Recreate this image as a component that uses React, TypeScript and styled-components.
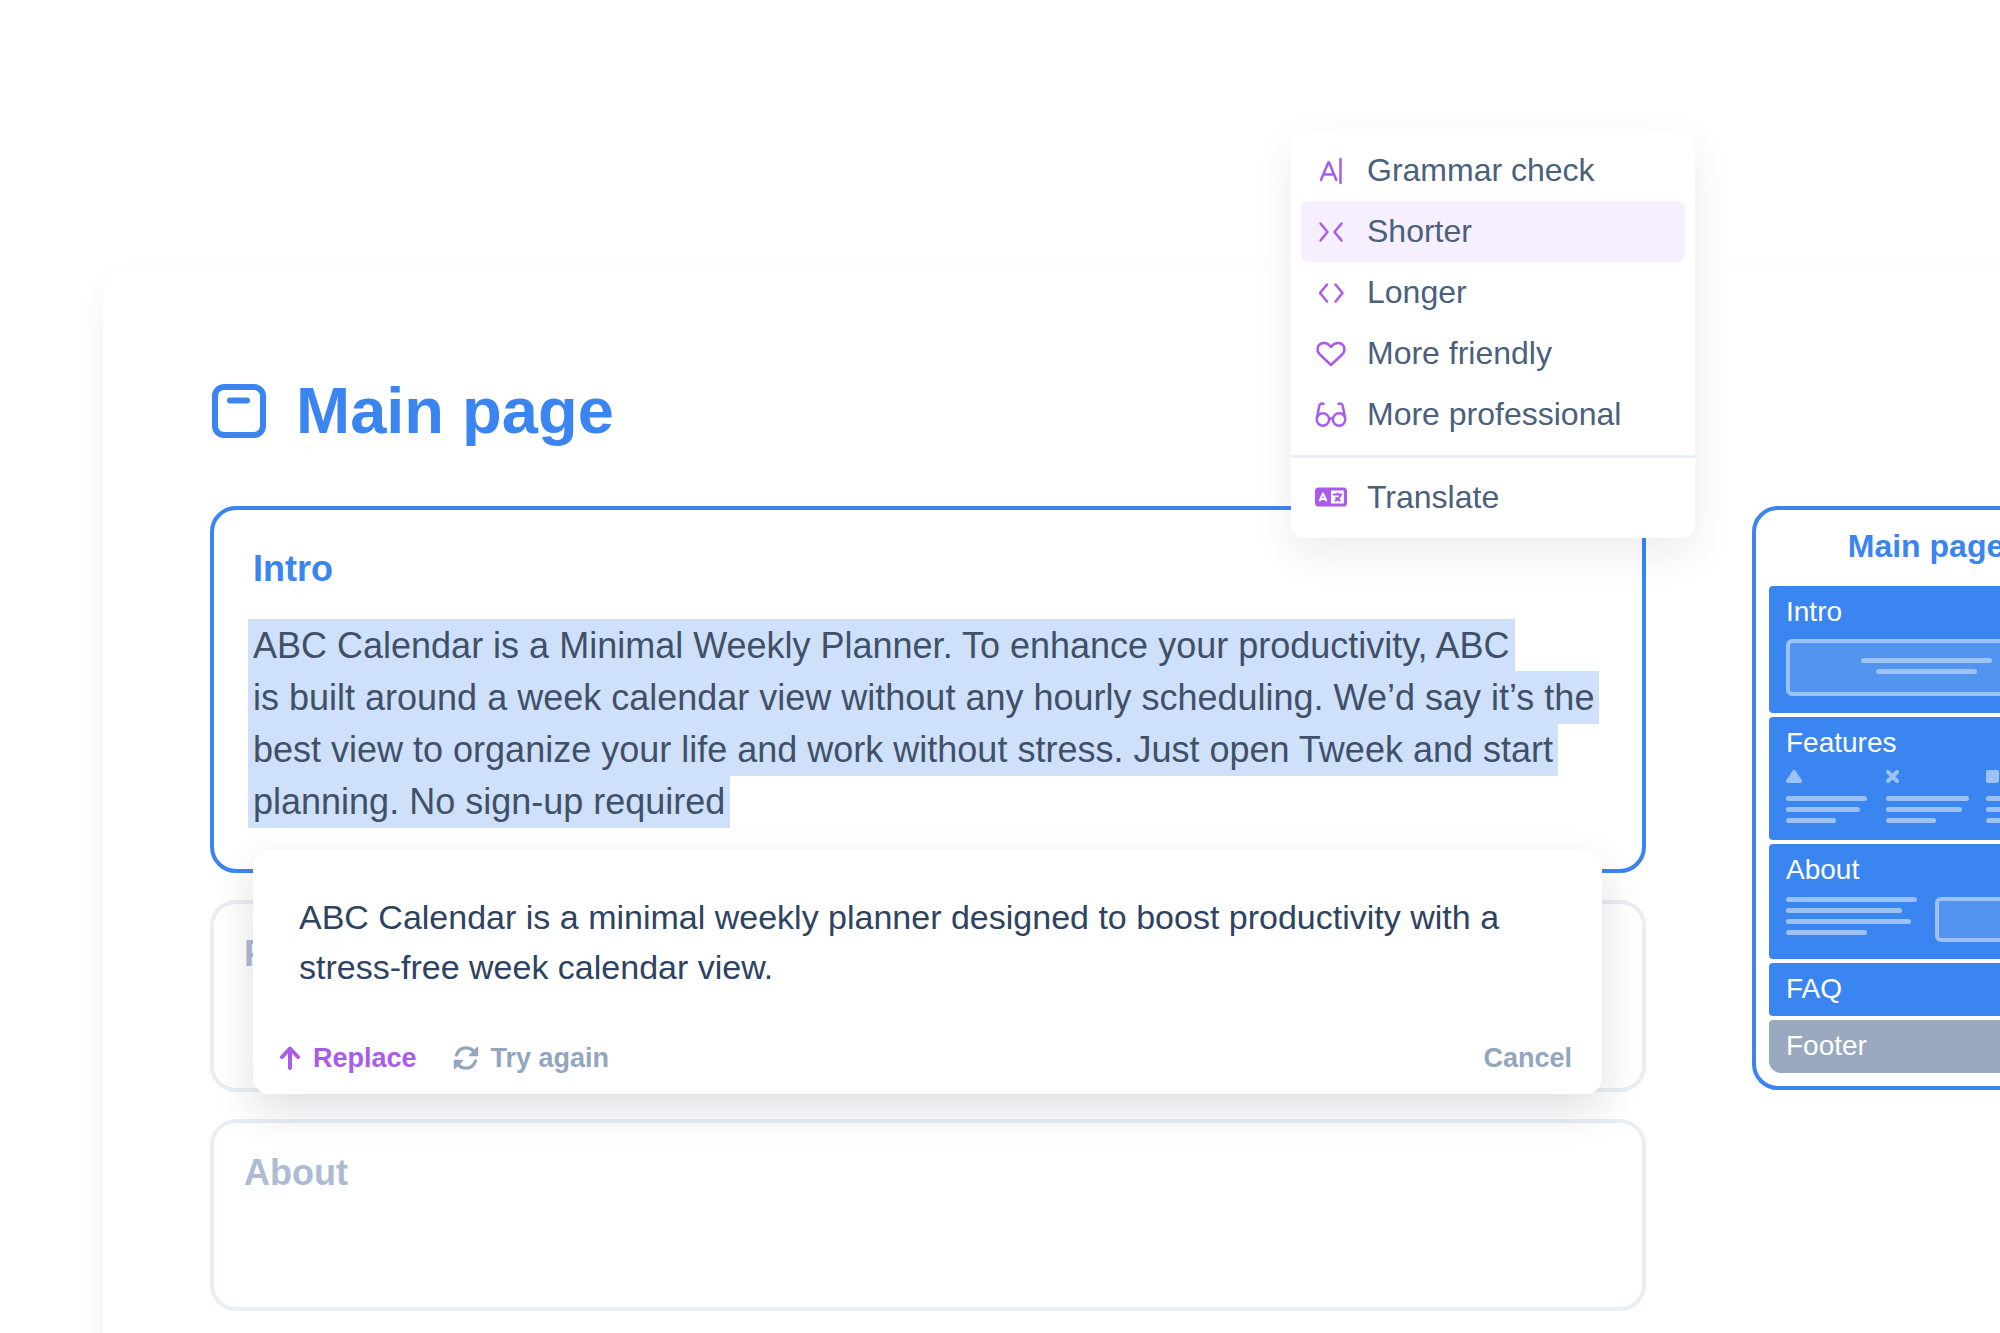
import React from "react";
import styled, { createGlobalStyle, css } from "styled-components";
import { FaLanguage } from "react-icons/fa6";

const blue = "#3b85f0";
const purple = "#a95cec";
const slate = "#93a6bf";

const GlobalStyle = createGlobalStyle`
  *, *::before, *::after { box-sizing: border-box; }
  body {
    margin: 0;
    background: #fff;
    overflow-x: hidden;
    font-family: "Liberation Sans", Arial, Helvetica, sans-serif;
  }
  h1, h2, h3, p, ul { margin: 0; padding: 0; }
  ul { list-style: none; }
  svg { display: block; flex: none; }
`;

const Viewport = styled.main`
  min-height: 100vh;
  padding-top: 268px;
  overflow: hidden;
`;

const Board = styled.div`
  margin: 0 -207px -60px 103px;
  padding: 112px 107px 82px;
  border-radius: 28px 28px 0 0;
  background: #fff;
  box-shadow: 0 16px 32px rgba(30, 30, 50, 0.06);
`;

const TitleRow = styled.header`
  display: flex;
  align-items: center;
  gap: 30px;
  height: 62px;
  padding-left: 2px;
  color: ${blue};
`;

const PageTitle = styled.h1`
  font-size: 65px;
  line-height: 72px;
`;

const Columns = styled.div`
  display: flex;
  align-items: flex-start;
  gap: 106px;
  margin-top: 64px;
`;

const Sections = styled.div`
  flex: 1;
  min-width: 0;
  display: flex;
  flex-direction: column;
  gap: 27px;
`;

const Section = styled.section<{ $active?: boolean }>`
  position: relative;
  min-height: 192px;
  padding: 28px 30px;
  border: 4px solid #e9eef3;
  border-radius: 26px;
  ${(p) =>
    p.$active &&
    css`
      z-index: 1;
      padding: 37px 39px 41px;
      border-color: ${blue};
    `}
`;

const SectionTitle = styled.h2<{ $active?: boolean }>`
  font-size: 36px;
  line-height: 44px;
  color: ${(p) => (p.$active ? blue : "#adbcd2")};
`;

const Body = styled.p`
  margin-top: 29px;
  font-size: 36px;
  line-height: 52px;
  white-space: nowrap;
  color: #3f5068;
`;

const Selected = styled.mark`
  padding: 6px 5px;
  margin-left: -5px;
  color: inherit;
  background: #cfe0fb;
  box-decoration-break: clone;
  -webkit-box-decoration-break: clone;
`;

const Suggestion = styled.div`
  position: absolute;
  z-index: 1;
  top: calc(100% - 19px);
  left: 39px;
  right: 40px;
  padding: 42px 30px 14px 46px;
  border-radius: 16px;
  background: #fff;
  box-shadow: 0 16px 40px rgba(40, 30, 60, 0.14);
`;

const SuggestionText = styled.p`
  font-size: 34px;
  line-height: 50px;
  color: #2e435f;
`;

const Actions = styled.div`
  display: flex;
  align-items: center;
  gap: 36px;
  margin: 44px 0 0 -20px;
`;

const Action = styled.button<{ $tone: string; $end?: boolean }>`
  display: flex;
  align-items: center;
  gap: 12px;
  height: 44px;
  margin-left: ${(p) => (p.$end ? "auto" : "0")};
  padding: 0;
  border: 0;
  background: none;
  font: bold 27px/44px "Liberation Sans", Arial, sans-serif;
  color: ${(p) => p.$tone};
  cursor: pointer;
`;

const Menu = styled.div`
  position: absolute;
  z-index: 2;
  top: -380px;
  right: -53px;
  width: 404px;
  padding: 10px 0;
  border-radius: 14px;
  background: #fff;
  box-shadow: 0 16px 40px rgba(30, 30, 60, 0.08);
`;

const MenuItem = styled.button<{ $active?: boolean }>`
  display: flex;
  align-items: center;
  gap: 20px;
  width: calc(100% - 20px);
  height: 61px;
  margin: 0 10px;
  padding: 0 14px 2px;
  border: 0;
  border-radius: 8px;
  background: ${(p) => (p.$active ? "#f5effe" : "none")};
  font: 32px/40px "Liberation Sans", Arial, sans-serif;
  color: #4b607c;
  text-align: left;
  cursor: pointer;
  svg { color: ${purple}; }
`;

const Divider = styled.hr`
  height: 3px;
  margin: 10px 0 9px;
  border: 0;
  background: #e9eef8;
`;

const Preview = styled.aside`
  flex: none;
  width: 348px;
  padding: 0 13px 13px;
  border: 4px solid ${blue};
  border-radius: 26px;
`;

const PreviewTitle = styled.h2`
  padding: 16px 0 20px;
  font-size: 32px;
  line-height: 40px;
  text-align: center;
  color: ${blue};
`;

const Blocks = styled.ul`
  display: flex;
  flex-direction: column;
  gap: 4px;
`;

const Block = styled.li<{ $footer?: boolean }>`
  padding: 10px 17px 12px;
  border-radius: ${(p) => (p.$footer ? "4px 4px 12px 12px" : "4px")};
  background: ${(p) => (p.$footer ? "#99a9bf" : blue)};
`;

const BlockTitle = styled.h3`
  font-size: 28px;
  font-weight: 400;
  line-height: 31px;
  color: #fff;
`;

const BlockBody = styled.div`
  display: flex;
  justify-content: space-between;
  margin: 12px 0 5px;
`;

const Frame = styled.div<{ $half?: boolean }>`
  display: flex;
  align-items: center;
  justify-content: center;
  width: ${(p) => (p.$half ? "131px" : "100%")};
  height: ${(p) => (p.$half ? "45px" : "57px")};
  padding-bottom: 3px;
  border: 4px solid #9dc2f8;
  border-radius: 6px;
  background: #5494f1;
`;

const Feature = styled.div`
  display: flex;
  flex-direction: column;
  gap: 13px;
  width: 80px;
`;

const Lines = styled.div<{ $center?: boolean }>`
  display: flex;
  flex-direction: column;
  align-items: ${(p) => (p.$center ? "center" : "flex-start")};
  gap: 6px;
`;

const Line = styled.span<{ $width: number }>`
  width: ${(p) => p.$width}px;
  height: 5px;
  border-radius: 3px;
  background: #9dc2f8;
`;

function TextLines({ widths, center }: { widths: number[]; center?: boolean }) {
  return (
    <Lines $center={center}>
      {widths.map((w, i) => (
        <Line key={i} $width={w} />
      ))}
    </Lines>
  );
}

const stroke = {
  fill: "none",
  stroke: "currentColor",
  strokeLinecap: "round" as const,
  strokeLinejoin: "round" as const,
};

const PageIcon = () => (
  <svg width="54" height="54" viewBox="0 0 54 54" {...stroke} strokeWidth="6" aria-hidden="true">
    <rect x="3" y="3" width="48" height="48" rx="9" />
    <path d="M18 16.500h17" />
  </svg>
);

function MenuIcon({ children }: { children: React.ReactNode }) {
  return (
    <svg width="32" height="32" viewBox="0 0 32 32" {...stroke} strokeWidth="2.5" aria-hidden="true">
      {children}
    </svg>
  );
}

const GrammarIcon = () => (
  <MenuIcon>
    <path d="M6 26 13.300 8.500h.8L21.300 26M8.600 20.500h10.200M25.500 5v24" />
  </MenuIcon>
);
const ShorterIcon = () => (
  <MenuIcon>
    <path d="M5.500 8.500 12.500 17l-7 8.500M26.500 8.500 19.500 17l7 8.500" />
  </MenuIcon>
);
const LongerIcon = () => (
  <MenuIcon>
    <path d="M12 8.500 5 17l7 8.500M20.500 8.500l7 8.500-7 8.500" />
  </MenuIcon>
);
const HeartIcon = () => (
  <MenuIcon>
    <path d="M16 28 4.900 17.500C.8 13.300 2.200 6.800 8.200 6c3.200-.4 5.400.9 7.800 3.900 2.400-3 4.600-4.300 7.800-3.900 6 .8 7.400 7.300 3.300 11.500Z" />
  </MenuIcon>
);
const GlassesIcon = () => (
  <MenuIcon>
    <circle cx="7.900" cy="21.500" r="6.200" />
    <circle cx="24.100" cy="21.500" r="6.200" />
    <path d="M14.200 21q1.800-1.200 3.600 0M2 19.500 4.200 8.200Q4.800 4.600 8.500 5.900M30 19.500 27.800 8.200Q27.200 4.600 23.500 5.900" />
  </MenuIcon>
);

const ArrowUpIcon = () => (
  <svg width="22" height="24" viewBox="0 0 22 24" {...stroke} strokeWidth="4" aria-hidden="true">
    <path d="M11 22V3M3 11l8-8.500 8 8.500" />
  </svg>
);

const RetryIcon = () => (
  <svg width="26" height="24" viewBox="0 0 26 24" {...stroke} strokeWidth="3.2" aria-hidden="true">
    <path d="M3.500 9C5 4.500 8.500 1.800 13 1.800c3.500 0 6.500 1.700 8.200 4.200M22.500 15c-1.500 4.500-5 7.200-9.500 7.200-3.500 0-6.500-1.700-8.200-4.200" />
    <path d="M24.500 1.500v8h-8ZM1.500 22.500v-8h8Z" fill="currentColor" strokeWidth="1.500" />
  </svg>
);

const menuItems = [
  { label: "Grammar check", icon: <GrammarIcon /> },
  { label: "Shorter", icon: <ShorterIcon />, active: true },
  { label: "Longer", icon: <LongerIcon /> },
  { label: "More friendly", icon: <HeartIcon /> },
  { label: "More professional", icon: <GlassesIcon /> },
];

export default function App() {
  return (
    <>
      <GlobalStyle />
      <Viewport>
        <Board>
          <TitleRow>
            <PageIcon />
            <PageTitle>Main page</PageTitle>
          </TitleRow>
          <Columns>
            <Sections>
              <Section $active>
                <SectionTitle $active>Intro</SectionTitle>
                <Body>
                  <Selected>
                    ABC Calendar is a Minimal Weekly Planner. To enhance your productivity, ABC
                    <br />
                    is built around a week calendar view without any hourly scheduling. We’d say it’s the
                    <br />
                    best view to organize your life and work without stress. Just open Tweek and start
                    <br />
                    planning. No sign-up required
                  </Selected>
                </Body>
                <Suggestion>
                  <SuggestionText>
                    ABC Calendar is a minimal weekly planner designed to boost productivity with a
                    <br />
                    stress-free week calendar view.
                  </SuggestionText>
                  <Actions>
                    <Action type="button" $tone={purple}>
                      <ArrowUpIcon />
                      Replace
                    </Action>
                    <Action type="button" $tone={slate}>
                      <RetryIcon />
                      Try again
                    </Action>
                    <Action type="button" $tone={slate} $end>
                      Cancel
                    </Action>
                  </Actions>
                </Suggestion>
                <Menu>
                  {menuItems.map((item) => (
                    <MenuItem key={item.label} type="button" $active={item.active}>
                      {item.icon}
                      {item.label}
                    </MenuItem>
                  ))}
                  <Divider />
                  <MenuItem type="button">
                    <FaLanguage size={32} aria-hidden="true" />
                    Translate
                  </MenuItem>
                </Menu>
              </Section>
              <Section>
                <SectionTitle>Features</SectionTitle>
              </Section>
              <Section>
                <SectionTitle>About</SectionTitle>
              </Section>
            </Sections>
            <Preview>
              <PreviewTitle>Main page</PreviewTitle>
              <Blocks>
                <Block>
                  <BlockTitle>Intro</BlockTitle>
                  <BlockBody>
                    <Frame>
                      <TextLines widths={[131, 101]} center />
                    </Frame>
                  </BlockBody>
                </Block>
                <Block>
                  <BlockTitle>Features</BlockTitle>
                  <BlockBody>
                    <Feature>
                      <svg width="16" height="13" viewBox="0 0 16 13" fill="#9dc2f8" stroke="#9dc2f8" strokeWidth="4" strokeLinejoin="round" aria-hidden="true">
                        <path d="M8 2 14 11H2Z" />
                      </svg>
                      <TextLines widths={[81, 74, 50]} />
                    </Feature>
                    <Feature>
                      <svg width="13" height="13" viewBox="0 0 13 13" fill="none" stroke="#9dc2f8" strokeWidth="4" strokeLinecap="round" aria-hidden="true">
                        <path d="m2 2 9 9M11 2l-9 9" />
                      </svg>
                      <TextLines widths={[83, 76, 50]} />
                    </Feature>
                    <Feature>
                      <svg width="13" height="13" viewBox="0 0 13 13" fill="#9dc2f8" aria-hidden="true">
                        <rect width="13" height="13" rx="2" />
                      </svg>
                      <TextLines widths={[81, 74, 50]} />
                    </Feature>
                  </BlockBody>
                </Block>
                <Block>
                  <BlockTitle>About</BlockTitle>
                  <BlockBody>
                    <TextLines widths={[131, 116, 125, 81]} />
                    <Frame $half />
                  </BlockBody>
                </Block>
                <Block>
                  <BlockTitle>FAQ</BlockTitle>
                </Block>
                <Block $footer>
                  <BlockTitle>Footer</BlockTitle>
                </Block>
              </Blocks>
            </Preview>
          </Columns>
        </Board>
      </Viewport>
    </>
  );
}
